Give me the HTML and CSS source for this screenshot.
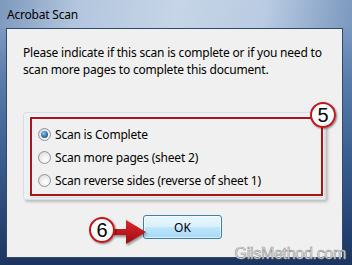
FILE: index.html
```html
<!DOCTYPE html>
<html>
<head>
<meta charset="utf-8">
<title>Acrobat Scan</title>
<link rel="stylesheet" href="styles.css">
</head>
<body>
<div class="window">
  <div class="titlebar">Acrobat Scan</div>
  <div class="client">
    <p class="msg">Please indicate if this scan is complete or if you need to<br>scan more pages to complete this document.</p>
    <div class="group">
      <div class="callout">
        <div class="opt"><span class="radio checked"></span><span>Scan is Complete</span></div>
        <div class="opt"><span class="radio"></span><span>Scan more pages (sheet 2)</span></div>
        <div class="opt"><span class="radio"></span><span>Scan reverse sides (reverse of sheet 1)</span></div>
        <span class="badge badge5">5</span>
      </div>
    </div>
    <div class="actions">
      <span class="badge badge6">6</span>
      <svg class="arrow" width="34" height="26" viewBox="0 0 34 26">
        <defs>
          <linearGradient id="ag" x1="0" y1="0" x2="0" y2="1">
            <stop offset="0" stop-color="#e0262c"/>
            <stop offset="1" stop-color="#9c0b12"/>
          </linearGradient>
        </defs>
        <path d="M0 10 H12 V1 L32 13 L12 25 V16 H0 Z" fill="url(#ag)"/>
      </svg>
      <button class="ok">OK</button>
    </div>
  </div>
  <div class="watermark">GilsMethod.com</div>
</div>
</body>
</html>
```

FILE: styles.css
```css
html, body {
  margin: 0;
  padding: 0;
}
body {
  width: 352px;
  height: 265px;
  overflow: hidden;
  font-family: "Noto Sans", "Open Sans", sans-serif;
  font-size: 12px;
  letter-spacing: -0.2px;
  color: #000;
}
.window {
  position: relative;
  box-sizing: border-box;
  width: 352px;
  height: 265px;
  padding: 0 9px 7px 6px;
  display: flex;
  flex-direction: column;
  background:
    linear-gradient(100deg, #7d98bd 0%, #b3c6de 22%, #c6d5e7 50%, #b9cbe2 75%, #7b98bf 100%) top left / 100% 28px no-repeat,
    linear-gradient(to bottom, #8fa9cb 0, #5a7cab 30%, #3a5d8f 60%, #1b355f 100%);
}
.titlebar {
  height: 28px;
  display: flex;
  align-items: center;
  padding-left: 1px;
  font-size: 12px;
  color: #000;
}
.client {
  flex: 1;
  background: #f0f0f0;
  border: 1px solid #33496a;
  padding: 15px 0 0 16px;
}
.msg {
  margin: 0;
  line-height: 17px;
}
.group {
  margin-top: 34px;
  width: 303px;
  box-sizing: border-box;
  border: 1px solid #d5dfe5;
  border-radius: 3px;
  padding: 4px 2px 3px 6px;
  box-shadow: 2px 2px 3px rgba(0, 0, 0, 0.22);
}
.callout {
  position: relative;
  box-sizing: border-box;
  height: 79px;
  border: 2px solid #a8161c;
  padding: 4px 0 0 6px;
  box-shadow: 0 0 0 1px rgba(255, 255, 255, 0.7), 1px 1px 2px rgba(0, 0, 0, 0.25);
}
.opt {
  height: 23px;
  display: flex;
  align-items: center;
  gap: 4px;
}
.radio {
  width: 13px;
  height: 13px;
  box-sizing: border-box;
  border-radius: 50%;
  border: 1px solid #8f9397;
  background: radial-gradient(circle at 60% 65%, #ffffff 0, #f0f0f0 40%, #d0d2d4 100%);
  position: relative;
  flex: none;
}
.radio.checked::after {
  content: "";
  position: absolute;
  left: 2px;
  top: 2px;
  width: 7px;
  height: 7px;
  border-radius: 50%;
  background: radial-gradient(circle at 40% 35%, #9ccaf0 0, #3c7cb8 45%, #163f70 100%);
}
.badge {
  box-sizing: border-box;
  width: 26px;
  height: 26px;
  border-radius: 50%;
  border: 2px solid #c2151c;
  background: radial-gradient(circle at 45% 40%, #ffffff 55%, #ececec 100%);
  font-family: "Liberation Sans", Arial, sans-serif;
  font-size: 20px;
  letter-spacing: 0;
  line-height: 22px;
  text-align: center;
  color: #000;
  box-shadow: 1px 1px 2px rgba(0, 0, 0, 0.45);
}
.badge5 {
  position: absolute;
  left: 278px;
  top: -17px;
}
.actions {
  margin-top: 15px;
  display: flex;
  align-items: flex-start;
  padding-left: 66px;
}
.badge6 {
  margin-top: 2px;
  position: relative;
  z-index: 2;
}
.arrow {
  margin-top: 4px;
  margin-left: -1px;
  position: relative;
  z-index: 1;
  filter: drop-shadow(1px 2px 1px rgba(0, 0, 0, 0.4));
}
.ok {
  margin-left: -5px;
  width: 79px;
  height: 24px;
  box-sizing: border-box;
  border: 1px solid #3c7fb1;
  border-radius: 3px;
  background: linear-gradient(to bottom, #eaf6fd 0%, #d9f0fc 48%, #bee6fd 52%, #a7d9f5 100%);
  box-shadow: inset 0 0 0 1px rgba(255, 255, 255, 0.55);
  font-family: "Noto Sans", "Open Sans", sans-serif;
  font-size: 12px;
  color: #000;
  padding: 0;
}
.watermark {
  position: absolute;
  right: 6px;
  bottom: 2px;
  font-family: "Liberation Sans", Arial, sans-serif;
  font-size: 16px;
  letter-spacing: -0.3px;
  color: #f2f2f2;
  -webkit-text-stroke: 0.6px #8e8e8e;
}
```
